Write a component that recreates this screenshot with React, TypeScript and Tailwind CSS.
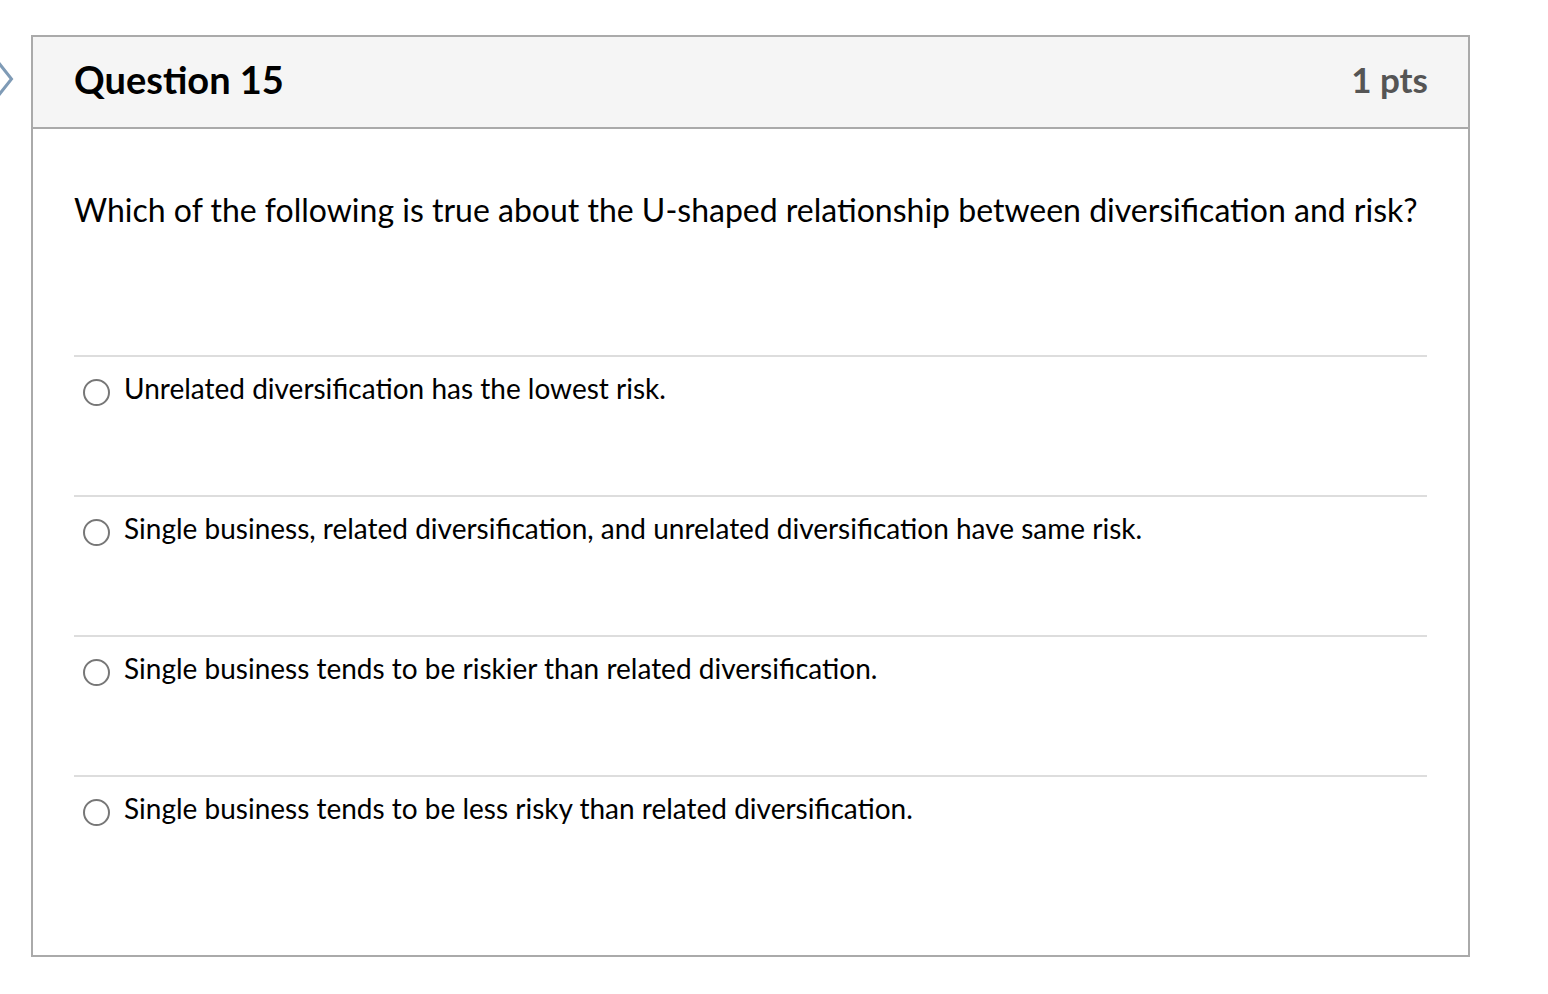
import React from "react";

const answers = [
  "Unrelated diversification has the lowest risk.",
  "Single business, related diversification, and unrelated diversification have same risk.",
  "Single business tends to be riskier than related diversification.",
  "Single business tends to be less risky than related diversification.",
];

export default function App() {
  return (
    <div className="relative min-h-[994px] w-[1548px] bg-white" style={{ fontFamily: "Lato, 'Open Sans', sans-serif" }}>
      <svg className="absolute left-0 top-[60px]" width="16" height="38" viewBox="0 0 16 38">
        <path d="M-2 2 L11.5 19 L-2 36" fill="none" stroke="#7f9bb6" strokeWidth="3" />
      </svg>
      <div className="pt-[35px] pl-[31px]">
        <div className="w-[1439px] border-2 border-[#aaaaaa]">
          <div className="flex h-[92px] items-center justify-between border-b-2 border-[#aaaaaa] bg-[#f5f5f5] pb-[6px] pl-[41px] pr-[40px]">
            <div className="text-[38px] font-bold leading-none text-black">Question 15</div>
            <div className="text-[35px] font-bold leading-none text-[#555555]">1 pts</div>
          </div>
          <div className="px-[41px] pb-[40px] pt-[60px]">
            <div className="text-[32px] leading-[42px] text-black">
              Which of the following is true about the U-shaped relationship between diversification and risk?
            </div>
            <div className="mt-[124px]">
              {answers.map((a) => (
                <div key={a} className="h-[140px] border-t-2 border-[#dddddd] pl-[9px] pt-[14px]">
                  <div className="flex items-start gap-[14px]">
                    <div className="mt-[8px] h-[27px] w-[27px] shrink-0 rounded-full border-2 border-[#777777] bg-white" />
                    <div className="text-[28px] leading-[34px] text-black">{a}</div>
                  </div>
                </div>
              ))}
            </div>
          </div>
        </div>
      </div>
    </div>
  );
}
